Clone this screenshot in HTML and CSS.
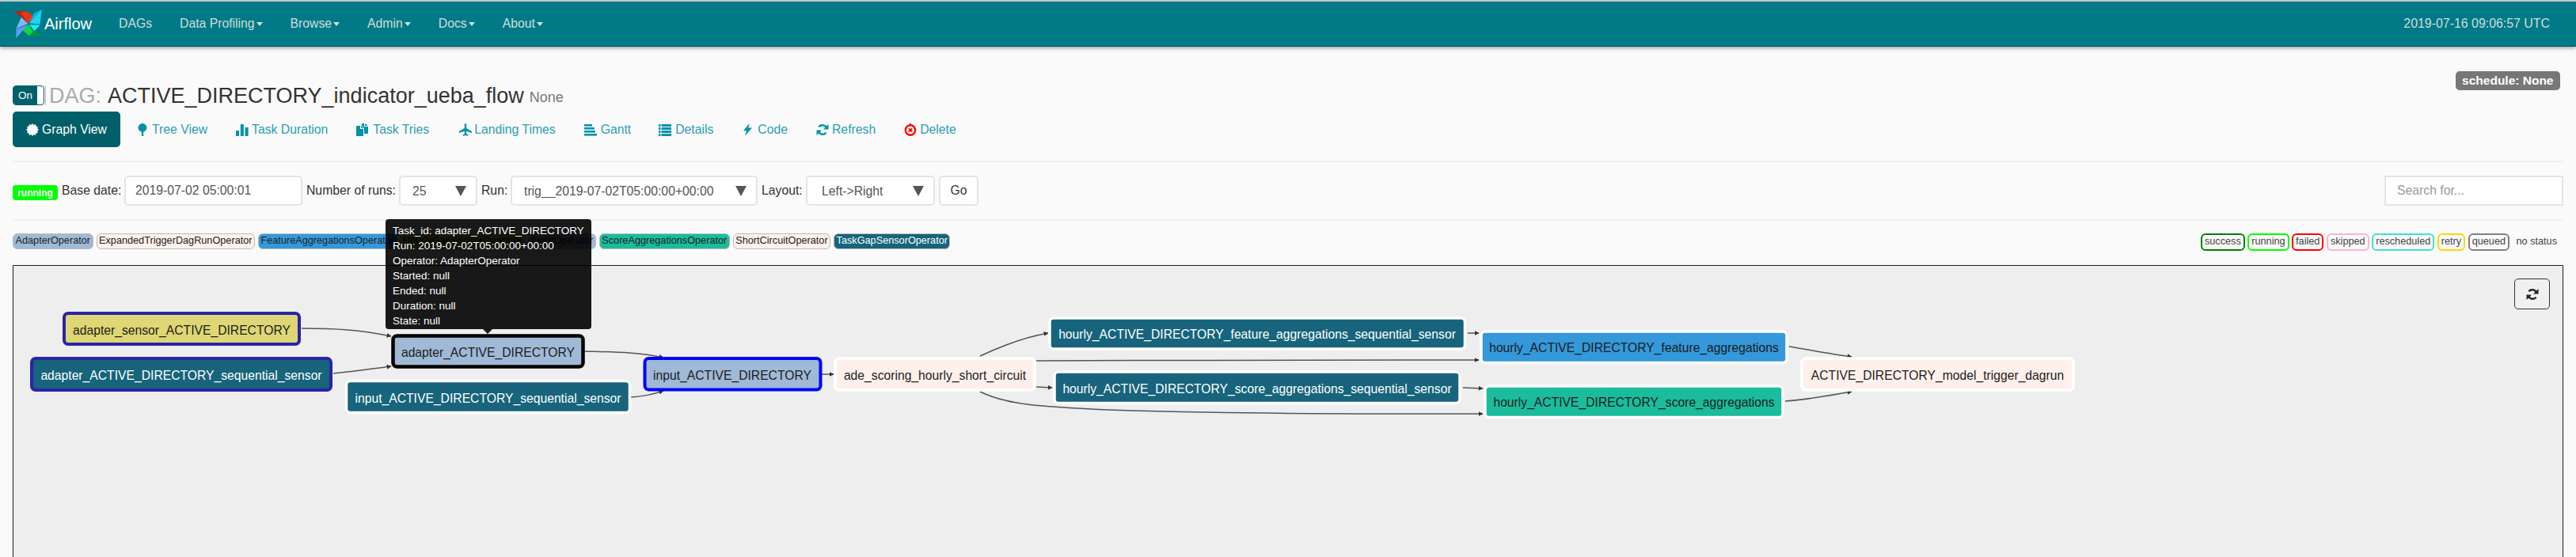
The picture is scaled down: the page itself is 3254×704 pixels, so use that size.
FILE: index.html
```html
<!DOCTYPE html>
<html lang="en">
<head>
<meta charset="utf-8">
<title>Airflow - Graph View</title>
<link rel="stylesheet" href="styles.css">
</head>
<body>
<nav class="navbar">
  <a class="brand">
    <svg class="logo" viewBox="50 33 114 114">
      <polygon fill="#b9260f" points="52,42 105,88 133,68 102,42"/>
      <polygon fill="#e0391f" points="78,48 105,88 133,68 102,42"/>
      <polygon fill="#7fb8fa" points="105,90 60,108 80,66"/>
      <polygon fill="#00b4e6" points="157,36 128,50 110,88"/>
      <polygon fill="#1bd6f0" points="157,36 110,88 150,92"/>
      <polygon fill="#12f2fb" points="110,94 150,95 130,118"/>
      <polygon fill="#00963a" points="162,135 128,118 110,94 108,135"/>
      <polygon fill="#12d44c" points="108,94 82,112 108,135 124,122"/>
      <polygon fill="#5a9cf2" points="60,145 105,94 60,110"/>
    </svg>
    <span>Airflow</span>
  </a>
  <ul class="menu">
    <li>DAGs</li>
    <li class="caret">Data Profiling</li>
    <li class="caret">Browse</li>
    <li class="caret">Admin</li>
    <li class="caret">Docs</li>
    <li class="caret">About</li>
  </ul>
  <span class="clock">2019-07-16 09:06:57 UTC</span>
</nav>

<main class="container">
  <header class="dag-head">
    <h3 class="title">
      <span class="toggle"><span class="toggle-on">On</span><span class="toggle-handle"></span></span>
      <span class="sep"></span>
      <span class="dag-label">DAG:</span>
      <span class="dag-name">ACTIVE_DIRECTORY_indicator_ueba_flow</span>
      <small>None</small>
    </h3>
    <span class="schedule">schedule: None</span>
  </header>

  <ul class="pills">
    <li class="pill active">
      <svg class="ico" viewBox="0 0 16 16"><polygon points="16,8 14.09,9.63 14.93,12 12.45,12.45 12,14.93 9.63,14.09 8,16 6.37,14.09 4,14.93 3.55,12.45 1.07,12 1.91,9.63 0,8 1.91,6.37 1.07,4 3.55,3.55 4,1.07 6.37,1.91 8,0 9.63,1.91 12,1.07 12.45,3.55 14.93,4 14.09,6.37"/></svg>
      Graph View
    </li>
    <li class="pill p-tree">
      <svg class="ico" viewBox="0 0 16 16"><path d="M8 0c3 0 5.500 2.600 5.500 5.600 0 2.600-1.900 4.600-4.300 5.100V16H6.800v-5.300C4.400 10.200 2.500 8.200 2.500 5.600 2.500 2.600 5 0 8 0z"/></svg>
      Tree View
    </li>
    <li class="pill p-duration">
      <svg class="ico" viewBox="0 0 16 16"><rect x="0" y="9" width="4" height="7"/><rect x="5.800" y="1" width="4" height="15"/><rect x="11.600" y="5" width="4" height="11"/></svg>
      Task Duration
    </li>
    <li class="pill p-tries">
      <svg class="ico" viewBox="0 0 16 16"><path d="M0 3h5v4h4v9H0zM6 3l3 3H6zM7 0h3v4h5v9h-5V6L7 3zM11 0l4 3h-4z"/></svg>
      Task Tries
    </li>
    <li class="pill p-landing">
      <svg class="ico" viewBox="0 0 16 16"><path d="M8 0c.8 0 1.200 1 1.200 2v4L16 10v2L9.200 9.800V13l2 1.500V16L8 15l-3.200 1v-1.500l2-1.500V9.800L0 12v-2l6.800-4V2C6.800 1 7.200 0 8 0z"/></svg>
      Landing Times
    </li>
    <li class="pill p-gantt">
      <svg class="ico" viewBox="0 0 16 16"><rect x="0" y="1" width="10" height="2.600"/><rect x="0" y="5" width="13" height="2.600"/><rect x="0" y="9" width="14" height="2.600"/><rect x="0" y="13" width="16" height="2.600"/></svg>
      Gantt
    </li>
    <li class="pill p-details">
      <svg class="ico" viewBox="0 0 16 16"><path d="M0 1h2.500v3H0zM3.500 1H16v3H3.500zM0 5h2.500v3H0zM3.500 5H16v3H3.500zM0 9h2.500v3H0zM3.500 9H16v3H3.500zM0 13h2.500v3H0zM3.500 13H16v3H3.500z"/></svg>
      Details
    </li>
    <li class="pill p-code">
      <svg class="ico ico-flash" viewBox="0 0 11 16"><path d="M7.500 0L0 9.200h4L2 16l9-10.500H6.500z"/></svg>
      Code
    </li>
    <li class="pill p-refresh">
      <svg class="ico" viewBox="0 0 16 16"><path class="arc" d="M13.500 6.500A6 6 0 0 0 3.300 4.200M2.500 9.500a6 6 0 0 0 10.200 2.300"/><path d="M15.500 1v6.500H9zM.5 15V8.500H7z"/></svg>
      Refresh
    </li>
    <li class="pill p-delete">
      <svg class="ico ico-del" viewBox="0 0 16 16"><circle class="ring" cx="8" cy="8.500" r="6.200"/><path class="cross" d="M5.900 6.400l4.200 4.200M10.100 6.400l-4.200 4.200"/><path class="tick" d="M8 0v2"/></svg>
      Delete
    </li>
  </ul>
  <hr class="rule rule-top">

  <form class="controls">
    <span class="badge-running">running</span>
    <label class="l-date">Base date:</label>
    <input class="field f-date" value="2019-07-02 05:00:01">
    <label class="l-runs">Number of runs:</label>
    <div class="pick f-runs"><select class="field"><option>25</option></select></div>
    <label class="l-run">Run:</label>
    <div class="pick f-run"><select class="field"><option>trig__2019-07-02T05:00:00+00:00</option></select></div>
    <label class="l-layout">Layout:</label>
    <div class="pick f-layout"><select class="field"><option>Left-&gt;Right</option></select></div>
    <button class="go" type="button">Go</button>
    <input class="search" placeholder="Search for...">
  </form>
  <hr class="rule rule-mid">

  <div class="legends">
    <div class="chips">
      <span class="chip c-adapter">AdapterOperator</span>
      <span class="chip c-trigger">ExpandedTriggerDagRunOperator</span>
      <span class="chip c-feature">FeatureAggregationsOperator</span>
      <span class="chip c-gap">HourlyGapSensorOperator</span>
      <span class="chip c-adapter">InputOperator</span>
      <span class="chip c-score">ScoreAggregationsOperator</span>
      <span class="chip c-trigger">ShortCircuitOperator</span>
      <span class="chip c-sensor">TaskGapSensorOperator</span>
    </div>
    <div class="states">
      <span class="state s-success">success</span>
      <span class="state s-running">running</span>
      <span class="state s-failed">failed</span>
      <span class="state s-skipped">skipped</span>
      <span class="state s-resched">rescheduled</span>
      <span class="state s-retry">retry</span>
      <span class="state s-queued">queued</span>
      <span class="state s-none">no status</span>
    </div>
  </div>

  <section class="graph">
    <button class="reload" type="button">
      <svg viewBox="0 0 16 16"><path class="arc" d="M13.500 6.500A6 6 0 0 0 3.300 4.200M2.500 9.500a6 6 0 0 0 10.200 2.300"/><path d="M15.500 1v6.500H9zM.5 15V8.500H7z"/></svg>
    </button>
    <svg class="dag" width="3220" height="400">
      <defs>
        <marker id="arrow" viewBox="0 0 10 10" refX="9" refY="5" markerWidth="6" markerHeight="6" markerUnits="userSpaceOnUse" orient="auto"><path d="M0 0L10 5L0 10z" fill="#333"/></marker>
      </defs>
      <g transform="translate(-17,-338)">
        <g class="edges">
          <path marker-end="url(#arrow)" d="M381 417C425 417 455 419 494 427"/>
          <path marker-end="url(#arrow)" d="M421 474C450 471 470 468 494 465"/>
          <path marker-end="url(#arrow)" d="M739 446C775 447 805 447 838 454"/>
          <path marker-end="url(#arrow)" d="M797 504C815 503 825 500 838 496"/>
          <path marker-end="url(#arrow)" d="M1038 475H1053"/>
          <path marker-end="url(#arrow)" d="M1238 452C1270 437 1295 428 1324 423"/>
          <path marker-end="url(#arrow)" d="M1309 458C1500 457 1700 457 1868 457"/>
          <path marker-end="url(#arrow)" d="M1309 491L1329 492"/>
          <path marker-end="url(#arrow)" d="M1238 497C1270 513 1310 516 1400 520C1550 525 1700 525 1873 525"/>
          <path marker-end="url(#arrow)" d="M1854 423H1868"/>
          <path marker-end="url(#arrow)" d="M1848 492L1873 493"/>
          <path marker-end="url(#arrow)" d="M2260 440C2285 444 2310 449 2339 453"/>
          <path marker-end="url(#arrow)" d="M2255 509C2285 507 2310 502 2339 497"/>
        </g>
        <g class="node n-sensor b-upstream"><rect x="81" y="398" width="297" height="39" rx="5"/><text x="229.500" y="419">adapter_sensor_ACTIVE_DIRECTORY</text></g>
        <g class="node n-gap b-upstream"><rect x="40" y="455" width="378" height="40" rx="5"/><text x="229" y="476">adapter_ACTIVE_DIRECTORY_sequential_sensor</text></g>
        <g class="node n-adapter b-selected"><rect x="496.500" y="426.500" width="240" height="39" rx="5"/><text x="616.500" y="447">adapter_ACTIVE_DIRECTORY</text></g>
        <g class="node n-gap b-plain"><rect x="437.500" y="483.500" width="358" height="40" rx="5"/><text x="616.500" y="505">input_ACTIVE_DIRECTORY_sequential_sensor</text></g>
        <g class="node n-adapter b-downstream"><rect x="814.500" y="455" width="222" height="39.500" rx="5"/><text x="925" y="476">input_ACTIVE_DIRECTORY</text></g>
        <g class="node n-trigger b-plain"><rect x="1055" y="455" width="252" height="40" rx="5"/><text x="1181" y="476">ade_scoring_hourly_short_circuit</text></g>
        <g class="node n-gap b-plain"><rect x="1326" y="404" width="524.500" height="39" rx="5"/><text x="1588" y="424">hourly_ACTIVE_DIRECTORY_feature_aggregations_sequential_sensor</text></g>
        <g class="node n-gap b-plain"><rect x="1332" y="472" width="512" height="39.500" rx="5"/><text x="1588" y="493">hourly_ACTIVE_DIRECTORY_score_aggregations_sequential_sensor</text></g>
        <g class="node n-feature b-plain"><rect x="1871" y="421" width="386" height="39.500" rx="5"/><text x="2064" y="441">hourly_ACTIVE_DIRECTORY_feature_aggregations</text></g>
        <g class="node n-score b-plain"><rect x="1876" y="490" width="376" height="39.500" rx="5"/><text x="2064" y="510">hourly_ACTIVE_DIRECTORY_score_aggregations</text></g>
        <g class="node n-trigger b-plain"><rect x="2276" y="455" width="343" height="40" rx="5"/><text x="2447.500" y="476">ACTIVE_DIRECTORY_model_trigger_dagrun</text></g>
      </g>
    </svg>
  </section>
</main>

<aside class="tooltip">
  <div>Task_id: adapter_ACTIVE_DIRECTORY</div>
  <div>Run: 2019-07-02T05:00:00+00:00</div>
  <div>Operator: AdapterOperator</div>
  <div>Started: null</div>
  <div>Ended: null</div>
  <div>Duration: null</div>
  <div>State: null</div>
</aside>
</body>
</html>
```

FILE: styles.css
```css
* { box-sizing: border-box; }
html, body { margin: 0; height: 704px; overflow: hidden; }
body {
  background: #fafafa;
  color: #333;
  font-family: "Liberation Sans", Arial, sans-serif;
  font-size: 15.750px;
  position: relative;
}

/* navbar */
.navbar {
  display: flex;
  align-items: center;
  height: 59px;
  padding: 0 33px 0 17px;
  background: #007a87;
  border-top: 2px solid #c4c8c8;
  border-bottom: 1px solid #00505a;
  box-shadow: 0 2px 5px rgba(0, 0, 0, .35);
}
.brand { display: flex; align-items: center; color: #fff; font-size: 20px; }
.logo { width: 38px; height: 38px; margin-right: 1px; }
.menu { display: flex; margin: 0 0 0 34px; padding: 0; list-style: none; color: #d3dcdc; }
.menu li { margin-right: 35px; white-space: nowrap; }
.caret::after {
  content: "";
  display: inline-block;
  margin-left: 2px;
  vertical-align: 2px;
  border-top: 5px solid #d3dcdc;
  border-left: 4.500px solid transparent;
  border-right: 4.500px solid transparent;
}
.clock { margin-left: auto; color: #d3dcdc; font-size: 15.900px; }

/* layout */
.container { padding: 31px 16px 0; }
.dag-head { display: flex; justify-content: space-between; align-items: flex-start; height: 51px; }
.title { display: flex; align-items: center; margin: 13px 0 0; font-weight: 400; font-size: 27px; line-height: 30px; white-space: nowrap; }
.toggle {
  display: flex;
  width: 40px;
  height: 25px;
  overflow: hidden;
  border: 1px solid #00606b;
  border-radius: 4px;
  background: #fff;
}
.toggle-on {
  flex: 1;
  background: #00606b;
  color: #fff;
  font-size: 13.500px;
  line-height: 23px;
  text-align: center;
}
.toggle-handle { width: 8px; }
.sep { width: 1px; height: 25px; margin: 0 4px 0 1px; background: #bbb; }
.dag-label { color: #aaa; margin-right: 8px; }
.dag-name { color: #333; }
.title small { margin: 5px 0 0 7px; color: #777; font-size: 18px; }
.schedule {
  margin-right: 4px;
  padding: 0 8.500px;
  height: 24px;
  background: #777;
  border-radius: 5px;
  color: #fff;
  font-size: 15.500px;
  font-weight: 700;
  line-height: 24px;
}

/* pills */
.pills { display: flex; align-items: center; height: 45px; margin: 0; padding: 0; list-style: none; color: #2a9fb0; }
.pill { display: flex; align-items: center; gap: 4px; white-space: nowrap; }
.pill.active {
  justify-content: center;
  width: 136px;
  height: 45px;
  background: #005f69;
  border-radius: 5px;
  color: #fff;
  margin-right: 20px;
}
.ico { width: 16px; height: 16px; fill: #0093a5; flex: none; }
.pill.active .ico { fill: #fff; }
.arc { fill: none; stroke: currentColor; stroke-width: 2.400; }
.p-refresh .arc { stroke: #0093a5; }
.p-tree { margin-right: 36px; }
.p-duration { margin-right: 36px; }
.p-tries { margin-right: 38px; gap: 5px; }
.p-landing { margin-right: 36px; gap: 3px; }
.p-gantt { margin-right: 35px; gap: 5px; }
.p-details { margin-right: 38px; gap: 5px; }
.p-code { margin-right: 36px; gap: 7px; }
.ico-flash { width: 11px; }
.p-refresh { margin-right: 36px; }
.ico-del { fill: none; }
.ring { stroke: #f00; stroke-width: 2.400; }
.cross { stroke: #e00; stroke-width: 2; }
.tick { stroke: #f00; stroke-width: 2; }

.rule { height: 2px; margin: 0; border: 0; background: #f1f1f1; }
.rule-top { margin-top: 17px; }
.rule-mid { margin-top: 17px; }

/* controls */
.controls { display: flex; align-items: center; gap: 5px; height: 38px; margin-top: 17px; }
.badge-running {
  width: 57px;
  height: 19px;
  margin-top: 4px;
  background: #0f0;
  border-radius: 4px;
  color: #fff;
  font-size: 12px;
  font-weight: 700;
  line-height: 20px;
  text-align: center;
}
.controls label { white-space: nowrap; color: #333; flex: none; }
.l-date { width: 74px; }
.l-runs { width: 112px; }
.l-run { width: 32px; }
.l-layout { width: 51px; }
.field, .go, .search {
  height: 38px;
  border: 2px solid #e4e4e4;
  background: #fff;
  color: #555;
  font: 15.750px "Liberation Sans", Arial, sans-serif;
  border-radius: 5px;
}
.field { padding: 0 12px; width: 100%; }
select.field { appearance: none; padding-left: 15px; outline: 0; }
.f-date { width: 225px; }
.pick { position: relative; }
.pick::after {
  content: "";
  position: absolute;
  right: 14px;
  top: 13px;
  border-top: 13px solid #555;
  border-left: 7px solid transparent;
  border-right: 7px solid transparent;
}
.f-runs { width: 99px; }
.f-run { width: 312px; }
.f-layout { width: 163px; }
.f-layout select { padding-left: 18px; }
.go { width: 50px; color: #333; }
.search { width: 226px; margin-left: auto; padding: 0 14px; border-radius: 0; }
.search::placeholder { color: #999; }

/* legends */
.legends { display: flex; justify-content: space-between; align-items: flex-start; height: 40px; margin-top: 16px; }
.chips { display: flex; gap: 4px; }
.chip {
  height: 20px;
  padding: 0 2.500px;
  border: 1.500px solid #bbb;
  border-radius: 6px;
  font-size: 12.700px;
  line-height: 17px;
  color: #222;
  white-space: nowrap;
}
.c-adapter { background: #9fb9d6; }
.c-trigger { background: #fff0eb; }
.c-feature { background: #3498db; }
.c-gap { background: #dfd675; }
.c-score { background: #1abc9c; }
.c-sensor { background: #17647c; color: #fff; }
.states { display: flex; gap: 3.500px; margin-right: 3px; }
.state {
  height: 22px;
  padding: 0 3px;
  border: 2.500px solid #000;
  border-radius: 6px;
  background: #fafafa;
  color: #444;
  font-size: 12.700px;
  line-height: 17px;
  white-space: nowrap;
}
.s-success { border-color: #008000; }
.s-running { border-color: #0f0; }
.s-failed { border-color: #f00; }
.s-skipped { border-color: #ffb6c1; }
.s-resched { border-color: #40e0d0; }
.s-retry { border-color: #ffd700; }
.s-queued { border-color: #808080; }
.s-none { border-color: #fbfbfb; }

/* graph */
.graph { position: relative; height: 400px; background: #eee; border: 1px solid #222; }
.dag { display: block; }
.reload {
  position: absolute;
  top: 16px;
  right: 16px;
  width: 45px;
  height: 39px;
  padding: 0;
  background: #f0f0f0;
  border: 1px solid #333;
  border-radius: 5px;
}
.reload svg { display: block; width: 16px; height: 16px; margin: auto; fill: #222; color: #222; }
.edges path { fill: none; stroke: #555; stroke-width: 1.500; }
.node rect { stroke-width: 3.500; }
.node text {
  font-family: "Liberation Sans", Arial, sans-serif;
  font-size: 15.700px;
  text-anchor: middle;
  dominant-baseline: central;
  fill: #1c1c1c;
}
.n-sensor rect { fill: #dfd675; }
.n-gap rect { fill: #17647c; }
.n-gap text { fill: #fff; }
.n-adapter rect { fill: #9fb9d6; }
.n-trigger rect { fill: #fff0eb; }
.n-feature rect { fill: #3498db; }
.n-score rect { fill: #1abc9c; }
.b-plain rect { stroke: #fff; }
.b-upstream rect { stroke: #2a24a8; stroke-width: 4; }
.b-selected rect { stroke: #000; stroke-width: 4.500; }
.b-downstream rect { stroke: #00f; stroke-width: 4; }

/* tooltip */
.tooltip {
  position: absolute;
  left: 487px;
  top: 277px;
  width: 260px;
  height: 139px;
  padding: 5px 9px;
  background: rgba(0, 0, 0, .9);
  border-radius: 4px;
  color: #fff;
  font-size: 13.500px;
  line-height: 19px;
  white-space: nowrap;
}
.tooltip::after {
  content: "";
  position: absolute;
  left: 123px;
  bottom: -6px;
  border-top: 6px solid rgba(0, 0, 0, .9);
  border-left: 6px solid transparent;
  border-right: 6px solid transparent;
}
```
